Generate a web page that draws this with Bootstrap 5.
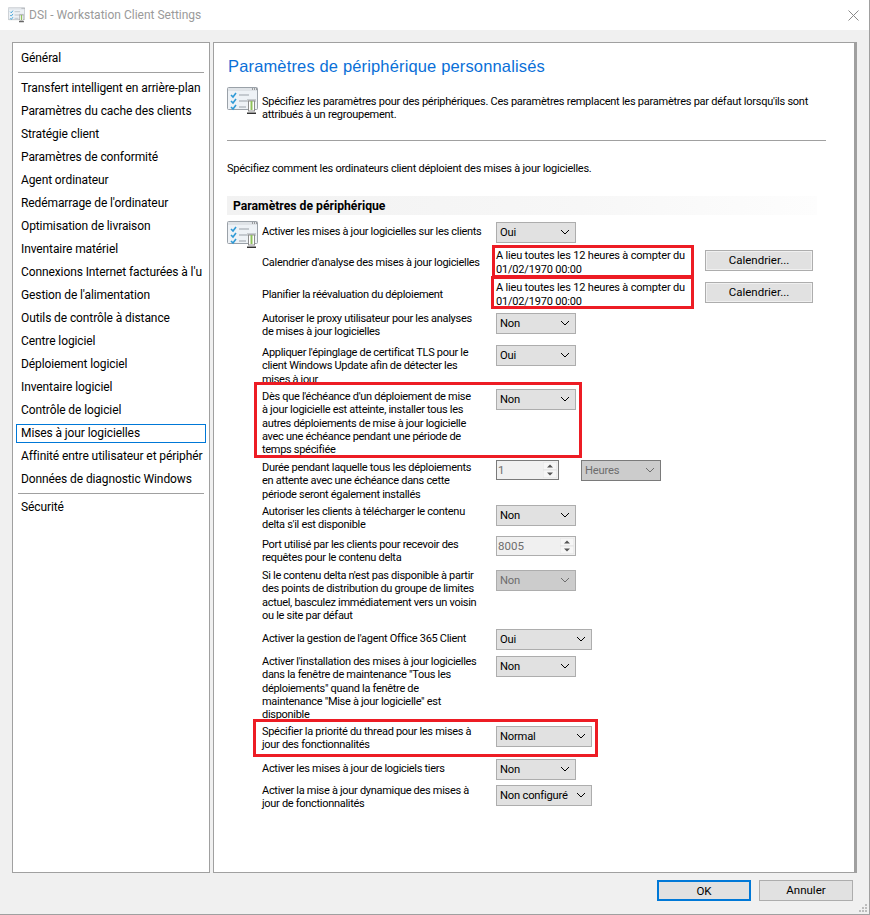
<!DOCTYPE html>
<html lang="fr">
<head>
    <meta charset="UTF-8">
    <meta name="viewport" content="width=device-width, initial-scale=1.0">
    <title>DSI - Workstation Client Settings</title>
    <link rel="stylesheet" href="https://cdn.jsdelivr.net/npm/bootstrap@5.3.1/dist/css/bootstrap.min.css">
    <style>
        html, body { height: 100%; margin: 0; }
        body { font-family: Roboto, "Liberation Sans", sans-serif; font-size: 12px; color: #000; background: #fff; overflow: hidden; }
        .win { position: relative; width: 870px; height: 915px; border-right: 1px solid #a0a0a0; border-bottom: 1px solid #a0a0a0; background: #f0f0f0; }
        .titlebar { height: 30px; background: #fff; padding-left: 8px; gap: 4px; color: #9a9a9a; font-size: 12px; }
        .titlebar .close-x { margin-left: auto; margin-right: 10px; }
        .panes { padding: 12px 13px 0 12px; gap: 3px; height: 843px; }
        .side { width: 198px; background: #fff; border: 1px solid #a0a0a0; padding: 4px 0 0 5px; flex: none; overflow: hidden; }
        .side a { display: block; height: 23px; line-height: 23px; width: 187px; padding-left: 3px; color: #000; text-decoration: none; font-size: 12px; letter-spacing: -.1px; white-space: nowrap; overflow: hidden; }
        .side a.on { outline: 1px solid #0078d7; outline-offset: -1px; width: 190px; margin-left: -2px; padding-left: 5px; height: 19px; line-height: 18px; margin-top: 2px; margin-bottom: 2px; }
        .side hr { margin: 2px 0 4px 0; width: 186px; border-top: 1px solid #a0a0a0; opacity: 1; }
        .side hr.second { margin: 2px 0 2px 0; }
        .main { width: 644px; background: #fff; border: 1px solid #a0a0a0; border-right: 3px solid #a0a0a0; padding: 0 0 0 13px; flex: none; }
        .main h1 { font-family: "Liberation Sans", sans-serif; font-size: 16.5px; font-weight: 400; color: #0a6fd8; margin: 13px 0 0 1px; height: 20px; line-height: 20px; letter-spacing: .15px; }
        .intro { margin-top: 11px; gap: 4px; height: 34px; font-size: 11px; letter-spacing: -.25px; line-height: 13px; }
        .intro p { margin: 8px 0 0; width: 555px; }
        .main hr.rule { width: 599px; margin: 19px 0 0; border-top: 1px solid #a0a0a0; opacity: 1; }
        .lead-txt { margin: 21px 0 0; font-size: 11px; letter-spacing: -.25px; line-height: 14px; }
        .group-head { width: 590px; height: 19px; line-height: 20px; margin: 20px 0 0; padding-left: 6px; font-weight: 700; font-size: 12.2px; background: linear-gradient(to right, #f2f2f2, #f7f7f7 60%, #fdfdfd); }
        .params { position: relative; display: grid; margin-top: 7px; grid-template-columns: 35px 234px 1fr; grid-template-rows: 30px 32px 29px 32px 44px 71px 45px 31px 34px 59px 27px 70px 33px 26px 30px; font-size: 11px; letter-spacing: -.3px; line-height: 13.25px; }
        .params .lbl { grid-column: 2; white-space: nowrap; }
        .params .ctl { grid-column: 3; display: flex; gap: 22px; align-items: flex-start; letter-spacing: 0; }
        .params .ctl.tight { gap: 11px; }
        .params .ico { grid-column: 1; grid-row: 1; margin-top: -1px; }
        .one { padding-top: 3px; }
        .one-low { padding-top: 4px; }
        .up { margin-top: -1px; }
        .mid { margin-top: 1px; }
        .low { margin-top: 2px; }
        .dd { height: 21px; width: 80px; background: #e1e1e1; border: 1px solid #adadad; padding-left: 3px; line-height: 19px; font-size: 11.2px; letter-spacing: -.2px; position: relative; }
        .dd.wide { width: 96px; }
        .dd.off { background: #cccccc; color: #6d6d6d; }
        .dd.dark { border-color: #7a7a7a; }
        .dd svg { position: absolute; right: 5px; top: 6px; }
        .spin { height: 20px; background: #f0f0f0; border: 1px solid #7a7a7a; padding-left: 1px; line-height: 18px; font-size: 11.5px; color: #6d6d6d; position: relative; }
        .spin.w1 { width: 63px; }
        .spin.w2 { width: 80px; border-color: #adadad; }
        .spin-btn { position: absolute; right: 1px; top: 1px; width: 14px; height: 16px; }
        .sched { width: 202px; height: 33px; border: 3px solid #ed1c24; padding: 1px 0 0 1px; line-height: 13.5px; font-size: 11px; letter-spacing: -.18px; margin-left: -4px; margin-top: -7px; white-space: nowrap; flex: none; }
        .sched.second { margin-top: -8px; margin-left: -5px; width: 203px; padding: 2px 0 0 2px; }
        .cal { width: 108px; height: 21px; padding: 0; background: #e1e1e1; border: 1px solid #adadad; border-radius: 0; font-size: 11.5px; line-height: 17px; box-shadow: inset 0 0 0 1px #f0f0f0; color: #000; margin-top: -2px; }
        .redbox { position: absolute; border: 3px solid #ed1c24; pointer-events: none; }
        .rb-a { left: 27px; top: 160px; width: 328px; height: 76px; }
        .rb-b { left: 26px; top: 497px; width: 345px; height: 38px; }
        .foot { height: 41px; padding: 7px 16px 0 0; gap: 8px; }
        .foot button { width: 94px; height: 21px; padding: 0; font-size: 11.5px; line-height: 17px; background: #e1e1e1; color: #000; border: 1px solid #adadad; border-radius: 0; }
        .foot button.def { border: 2px solid #0078d7; line-height: 16px; }
        .grip { position: absolute; right: 1px; bottom: 1px; }
    </style>
</head>
<body>
    <svg width="0" height="0" class="d-block position-absolute">
        <symbol id="settings-ico" viewBox="0 0 31 28">
            <rect x=".5" y=".5" width="30" height="22" rx="1" fill="#eef2f6" stroke="#9aa1a8"/>
            <rect x="1" y="1" width="29" height="3" fill="#dfe3e7"/>
            <path d="M25 2h1M27 2h1M29 2h1" stroke="#555"/>
            <path d="M4 8l2 2 3-4M4 14l2 2 3-4M4 20l2 2 3-4" fill="none" stroke="#2f9ad6" stroke-width="1.6"/>
            <path d="M12 8h10M12 14h8M12 20h7" stroke="#9aa1a8"/>
            <rect x="20" y="12" width="9" height="3" fill="#c8ccd0"/>
            <rect x="21.500" y="14" width="6" height="10" fill="#fff" stroke="#8c8c8c"/>
            <path d="M24.500 14v9" stroke="#8fc25a" stroke-width="2"/>
            <path d="M20 25.500h9v1.500h-9z" fill="#333"/>
        </symbol>
        <symbol id="chev" viewBox="0 0 10 6">
            <path d="M1 1l4 4 4-4" fill="none" stroke="currentColor"/>
        </symbol>
        <symbol id="spinner" viewBox="0 0 14 16">
            <rect width="14" height="8" fill="#f6f6f6" stroke="#e3e3e3"/>
            <rect y="8" width="14" height="8" fill="#f6f6f6" stroke="#e3e3e3"/>
            <path d="M4 5.500l3-3 3 3zM4 10.500l3 3 3-3z" fill="#555"/>
        </symbol>
    </svg>

    <div class="win">
        <div class="titlebar d-flex align-items-center">
            <svg width="17" height="16" viewBox="0 0 31 28"><use href="#settings-ico"/></svg>
            <span>DSI - Workstation Client Settings</span>
            <svg class="close-x" width="11" height="11" viewBox="0 0 11 11"><path d="M.5.5l10 10M10.500.5l-10 10" stroke="#8a8a8a"/></svg>
        </div>

        <div class="panes d-flex">
            <nav class="side">
                <a href="#">Général</a>
                <hr>
                <a href="#">Transfert intelligent en arrière-plan</a>
                <a href="#">Paramètres du cache des clients</a>
                <a href="#">Stratégie client</a>
                <a href="#">Paramètres de conformité</a>
                <a href="#">Agent ordinateur</a>
                <a href="#">Redémarrage de l'ordinateur</a>
                <a href="#">Optimisation de livraison</a>
                <a href="#">Inventaire matériel</a>
                <a href="#">Connexions Internet facturées à l'u</a>
                <a href="#">Gestion de l'alimentation</a>
                <a href="#">Outils de contrôle à distance</a>
                <a href="#">Centre logiciel</a>
                <a href="#">Déploiement logiciel</a>
                <a href="#">Inventaire logiciel</a>
                <a href="#">Contrôle de logiciel</a>
                <a href="#" class="on">Mises à jour logicielles</a>
                <a href="#">Affinité entre utilisateur et périphér</a>
                <a href="#">Données de diagnostic Windows</a>
                <hr class="second">
                <a href="#">Sécurité</a>
            </nav>

            <main class="main">
                <h1>Paramètres de périphérique personnalisés</h1>
                <div class="intro d-flex">
                    <svg width="31" height="28" class="flex-shrink-0"><use href="#settings-ico"/></svg>
                    <p>Spécifiez les paramètres pour des périphériques. Ces paramètres remplacent les paramètres par défaut lorsqu'ils sont attribués à un regroupement.</p>
                </div>
                <hr class="rule">
                <p class="lead-txt">Spécifiez comment les ordinateurs client déploient des mises à jour logicielles.</p>
                <div class="group-head">Paramètres de périphérique</div>

                <div class="params">
                    <svg class="ico" width="31" height="28"><use href="#settings-ico"/></svg>
                    <div class="lbl one">Activer les mises à jour logicielles sur les clients</div>
                    <div class="ctl"><div class="dd">Oui<svg width="10" height="6"><use href="#chev"/></svg></div></div>

                    <div class="lbl one-low">Calendrier d'analyse des mises à jour logicielles</div>
                    <div class="ctl tight"><div class="sched">A lieu toutes les 12 heures à compter du<br>01/02/1970 00:00</div><button class="cal btn">Calendrier...</button></div>

                    <div class="lbl one-low">Planifier la réévaluation du déploiement</div>
                    <div class="ctl tight"><div class="sched second">A lieu toutes les 12 heures à compter du<br>01/02/1970 00:00</div><button class="cal btn">Calendrier...</button></div>

                    <div class="lbl up">Autoriser le proxy utilisateur pour les analyses<br>de mises à jour logicielles</div>
                    <div class="ctl"><div class="dd">Non<svg width="10" height="6"><use href="#chev"/></svg></div></div>

                    <div class="lbl mid">Appliquer l'épinglage de certificat TLS pour le<br>client Windows Update afin de détecter les<br>mises à jour</div>
                    <div class="ctl"><div class="dd">Oui<svg width="10" height="6"><use href="#chev"/></svg></div></div>

                    <div class="lbl mid">Dès que l'échéance d'un déploiement de mise<br>à jour logicielle est atteinte, installer tous les<br>autres déploiements de mise à jour logicielle<br>avec une échéance pendant une période de<br>temps spécifiée</div>
                    <div class="ctl"><div class="dd">Non<svg width="10" height="6"><use href="#chev"/></svg></div></div>

                    <div class="lbl mid">Durée pendant laquelle tous les déploiements<br>en attente avec une échéance dans cette<br>période seront également installés</div>
                    <div class="ctl"><div class="spin w1">1<svg class="spin-btn"><use href="#spinner"/></svg></div><div class="dd off dark">Heures<svg width="10" height="6"><use href="#chev"/></svg></div></div>

                    <div class="lbl">Autoriser les clients à télécharger le contenu<br>delta s'il est disponible</div>
                    <div class="ctl"><div class="dd">Non<svg width="10" height="6"><use href="#chev"/></svg></div></div>

                    <div class="lbl low">Port utilisé par les clients pour recevoir des<br>requêtes pour le contenu delta</div>
                    <div class="ctl"><div class="spin w2">8005<svg class="spin-btn"><use href="#spinner"/></svg></div></div>

                    <div class="lbl up">Si le contenu delta n'est pas disponible à partir<br>des points de distribution du groupe de limites<br>actuel, basculez immédiatement vers un voisin<br>ou le site par défaut</div>
                    <div class="ctl"><div class="dd off">Non<svg width="10" height="6"><use href="#chev"/></svg></div></div>

                    <div class="lbl one">Activer la gestion de l'agent Office 365 Client</div>
                    <div class="ctl"><div class="dd wide">Oui<svg width="10" height="6"><use href="#chev"/></svg></div></div>

                    <div class="lbl up">Activer l'installation des mises à jour logicielles<br>dans la fenêtre de maintenance "Tous les<br>déploiements" quand la fenêtre de<br>maintenance "Mise à jour logicielle" est<br>disponible</div>
                    <div class="ctl"><div class="dd">Non<svg width="10" height="6"><use href="#chev"/></svg></div></div>

                    <div class="lbl up">Spécifier la priorité du thread pour les mises à<br>jour des fonctionnalités</div>
                    <div class="ctl"><div class="dd wide">Normal<svg width="10" height="6"><use href="#chev"/></svg></div></div>

                    <div class="lbl one">Activer les mises à jour de logiciels tiers</div>
                    <div class="ctl"><div class="dd">Non<svg width="10" height="6"><use href="#chev"/></svg></div></div>

                    <div class="lbl up">Activer la mise à jour dynamique des mises à<br>jour de fonctionnalités</div>
                    <div class="ctl"><div class="dd wide">Non configuré<svg width="10" height="6"><use href="#chev"/></svg></div></div>

                    <div class="redbox rb-a"></div>
                    <div class="redbox rb-b"></div>
                </div>
            </main>
        </div>

        <div class="foot d-flex justify-content-end">
            <button class="btn def">OK</button>
            <button class="btn">Annuler</button>
        </div>
        <svg class="grip" width="10" height="10" viewBox="0 0 10 10"><path d="M7 1h2v2H7zM4 4h2v2H4zM7 4h2v2H7zM1 7h2v2H1zM4 7h2v2H4zM7 7h2v2H7z" fill="#bdbdbd"/></svg>
    </div>
    <script src="https://cdn.jsdelivr.net/npm/bootstrap@5.3.1/dist/js/bootstrap.bundle.min.js"></script>
</body>
</html>
